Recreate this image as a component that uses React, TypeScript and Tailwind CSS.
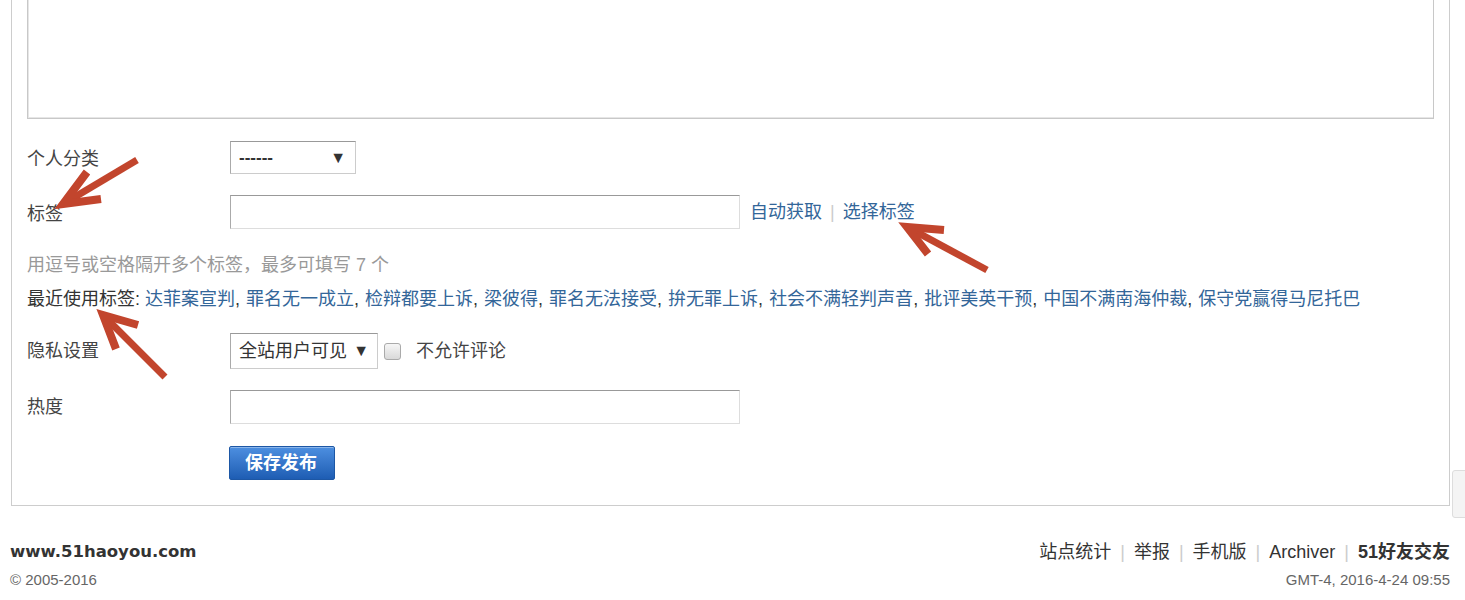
import React from "react";

const F = { fontFamily: '"Liberation Sans", "Noto Sans CJK SC", sans-serif' } as const;

const tags = [
  "达菲案宣判",
  "罪名无一成立",
  "检辩都要上诉",
  "梁彼得",
  "罪名无法接受",
  "拚无罪上诉",
  "社会不满轻判声音",
  "批评美英干预",
  "中国不满南海仲裁",
  "保守党赢得马尼托巴",
];

function Arrow({ tip, tail, w1, w2 }: { tip: [number, number]; tail: [number, number]; w1: [number, number]; w2: [number, number] }) {
  return (
    <g stroke="#c2452d" fill="none">
      <line x1={tail[0]} y1={tail[1]} x2={tip[0] + (tail[0] - tip[0]) * 0.08} y2={tip[1] + (tail[1] - tip[1]) * 0.08} strokeWidth={7} />
      <polyline points={`${w1[0]},${w1[1]} ${tip[0]},${tip[1]} ${w2[0]},${w2[1]}`} strokeWidth={8} strokeLinejoin="miter" strokeMiterlimit={10} />
    </g>
  );
}

export default function App() {
  return (
    <div className="relative w-[1465px] h-[600px] overflow-hidden bg-white text-[#333]" style={F}>
      {/* panel */}
      <div className="ml-[11px] w-[1439px] border-x border-b border-[#cdcdcd] pl-[15px] pr-[15px] pb-[25px]">
        <div className="h-[119px] border-x border-b border-[#c8c8c8] shadow-[inset_1px_-1px_0_#e6e6e6]" />

        <div className="mt-[22px] flex h-[33px] items-center">
          <div className="w-[203px] text-[18px] leading-[24px] text-[#444] pt-[2px]">个人分类</div>
          <div className="flex h-[33px] w-[126px] items-center justify-between border border-[#ccc] border-t-[#999] border-l-[#aaa] pl-[8px] pr-[9px]">
            <span className="text-[17px] leading-[20px] font-bold">------</span>
            <span className="text-[16px] leading-[20px]">▼</span>
          </div>
        </div>

        <div className="mt-[21px] flex h-[34px] items-center">
          <div className="w-[203px] text-[18px] leading-[24px] text-[#444] pt-[4px]">标签</div>
          <div className="h-[34px] w-[510px] border border-[#ddd] border-t-[#999] border-l-[#aaa]" />
          <a className="ml-[10px] text-[18px] leading-[24px] text-[#336699]">自动获取</a>
          <span className="mx-[8px] text-[18px] leading-[24px] text-[#ccc]">|</span>
          <a className="text-[18px] leading-[24px] text-[#336699]">选择标签</a>
        </div>

        <div className="mt-[24px] h-[24px] text-[18px] leading-[24px] text-[#999]">用逗号或空格隔开多个标签，最多可填写 7 个</div>

        <div className="mt-[10px] h-[24px] whitespace-nowrap text-[18px] leading-[24px] text-[#333]">
          最近使用标签:{" "}
          {tags.map((t, i) => (
            <React.Fragment key={t}>
              <a className="text-[#336699]">{t}</a>
              {i < tags.length - 1 ? <span className="mr-[1px]">, </span> : ""}
            </React.Fragment>
          ))}
        </div>

        <div className="mt-[22px] flex h-[36px] items-center">
          <div className="w-[203px] text-[18px] leading-[24px] text-[#444]">隐私设置</div>
          <div className="flex h-[36px] w-[148px] items-center justify-between border border-[#ccc] border-t-[#999] border-l-[#aaa] pl-[8px] pr-[8px]">
            <span className="text-[18px] leading-[24px]">全站用户可见</span>
            <span className="text-[16px] leading-[20px]">▼</span>
          </div>
          <div className="ml-[6px] h-[17px] w-[17px] rounded-[3px] border border-[#aaa] bg-gradient-to-b from-[#f6f6f6] to-[#d9d9d9]" />
          <span className="ml-[15px] text-[18px] leading-[24px] text-[#444]">不允许评论</span>
        </div>

        <div className="mt-[21px] flex h-[34px] items-center">
          <div className="w-[203px] text-[18px] leading-[24px] text-[#444]">热度</div>
          <div className="h-[34px] w-[510px] border border-[#ddd] border-t-[#999] border-l-[#aaa]" />
        </div>

        <div className="mt-[22px] flex h-[34px] items-center pl-[202px]">
          <div className="flex h-[34px] w-[106px] items-center rounded-[2px] border border-[#1d57a5] bg-gradient-to-b from-[#4d8fe0] to-[#1e5db3] pl-[15px] text-[18px] font-bold leading-[24px] text-white shadow-[inset_0_1px_0_rgba(255,255,255,0.35)]">
            保存发布
          </div>
        </div>
      </div>

      {/* footer */}
      <div className="ml-[10px] mr-[15px] mt-[34px] flex justify-between">
        <div>
          <div className="h-[24px] text-[16.5px] font-bold leading-[24px] text-[#333]" style={{ fontFamily: '"DejaVu Sans", Verdana, sans-serif' }}>
            www.51haoyou.com
          </div>
          <div className="mt-[4px] h-[24px] text-[15px] leading-[24px] text-[#666]">© 2005-2016</div>
        </div>
        <div className="flex flex-col items-end">
          <div className="flex h-[24px] items-center whitespace-nowrap text-[18px] leading-[24px] text-[#333]">
            <a>站点统计</a>
            <span className="mx-[9px] text-[#ccc]">|</span>
            <a>举报</a>
            <span className="mx-[9px] text-[#ccc]">|</span>
            <a>手机版</a>
            <span className="mx-[9px] text-[#ccc]">|</span>
            <a>Archiver</a>
            <span className="mx-[9px] text-[#ccc]">|</span>
            <strong className="font-bold">51好友交友</strong>
          </div>
          <div className="mt-[4px] h-[24px] text-[15px] leading-[24px] text-[#666]">GMT-4, 2016-4-24 09:55</div>
        </div>
      </div>

      {/* floating side button */}
      <div className="absolute left-[1452px] top-[470px] h-[48px] w-[20px] rounded-l-[3px] border border-[#ddd] bg-[#f4f4f4]" />

      {/* annotation arrows */}
      <svg className="pointer-events-none absolute left-0 top-0" width={1465} height={600}>
        <Arrow tip={[63, 204]} tail={[137, 160]} w1={[87, 172]} w2={[101, 199]} />
        <Arrow tip={[907, 227]} tail={[987, 270]} w1={[944, 230]} w2={[928, 254]} />
        <Arrow tip={[103, 315]} tail={[165, 377]} w1={[138, 325]} w2={[116, 349]} />
      </svg>
    </div>
  );
}
